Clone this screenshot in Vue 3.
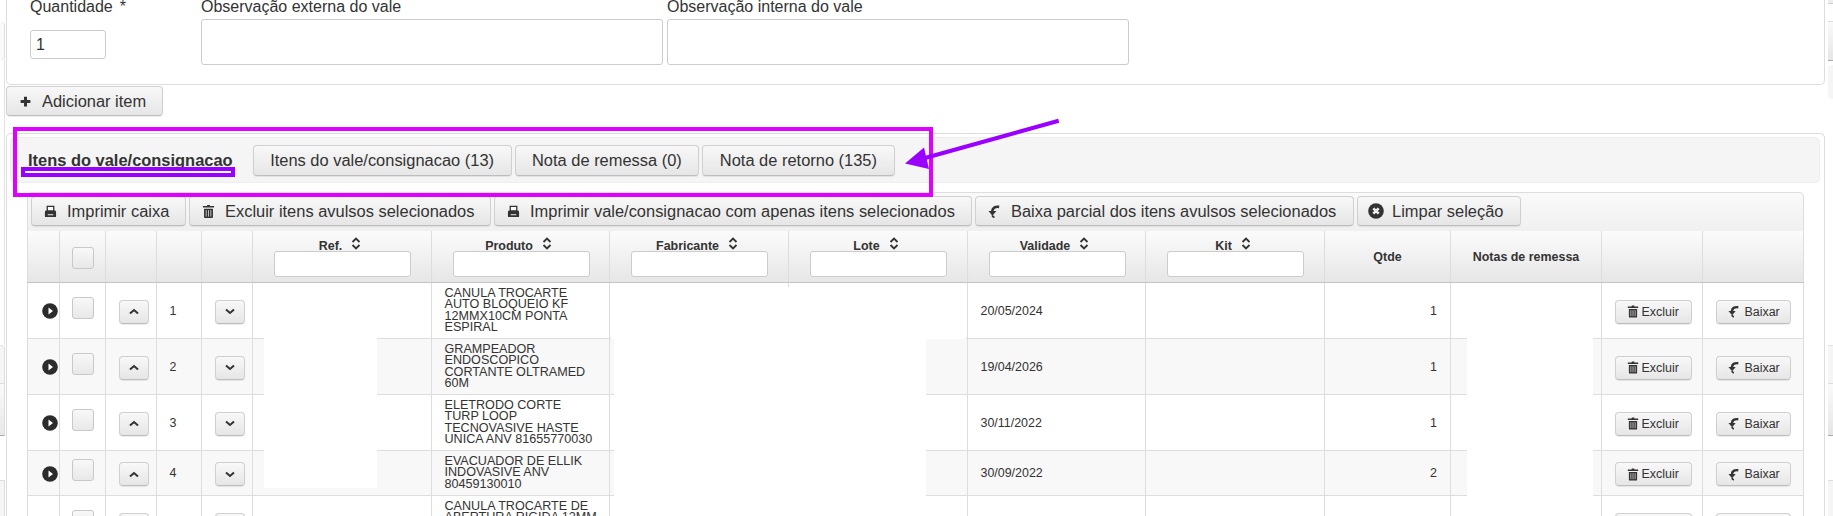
<script setup>
const toolbar = [
  { icon: 'print', label: 'Imprimir caixa', w: 155 },
  { icon: 'trash', label: 'Excluir itens avulsos selecionados', w: 302 },
  { icon: 'print', label: 'Imprimir vale/consignacao com apenas itens selecionados', w: 478 },
  { icon: 'undo', label: 'Baixa parcial dos itens avulsos selecionados', w: 379 },
  { icon: 'clear', label: 'Limpar seleção', w: 164 }
]
const colWidths = [32, 46, 51, 45, 51, 179, 178, 179, 179, 178, 179, 126, 151, 101, 101]
const sortCols = ['Ref.', 'Produto', 'Fabricante', 'Lote', 'Validade', 'Kit']
const rows = [
  { n: 1, h: 'r56', prod: 'CANULA TROCARTE\nAUTO BLOQUEIO KF\n12MMX10CM PONTA\nESPIRAL', date: '20/05/2024', q: 1 },
  { n: 2, h: 'r56', prod: 'GRAMPEADOR\nENDOSCOPICO\nCORTANTE OLTRAMED\n60M', date: '19/04/2026', q: 1 },
  { n: 3, h: 'r56', prod: 'ELETRODO CORTE\nTURP LOOP\nTECNOVASIVE HASTE\nUNICA ANV 81655770030', date: '30/11/2022', q: 1 },
  { n: 4, h: 'r45', prod: 'EVACUADOR DE ELLIK\nINDOVASIVE ANV\n80459130010', date: '30/09/2022', q: 2 },
  { n: 5, h: 'r56', prod: 'CANULA TROCARTE DE\nABERTURA RIGIDA 12MM\n\u00a0\n\u00a0', date: '', q: '' }
]
</script>

<template>
  <div class="page">
    <section class="form-panel">
      <div class="field qty">
        <label>Quantidade<span class="req">*</span></label>
        <input class="qty-input" value="1" />
      </div>
      <div class="field obs">
        <label>Observação externa do vale</label>
        <textarea></textarea>
      </div>
      <div class="field obs">
        <label>Observação interna do vale</label>
        <textarea></textarea>
      </div>
    </section>

    <button class="btn add-btn">
      <svg class="ic" viewBox="0 0 12 12"><path d="M4.600 1.500h2.800v3.100h3.100v2.800H7.400v3.100H4.600V7.400H1.500V4.600h3.100z" fill="#333" /></svg>
      <span>Adicionar item</span>
    </button>

    <section class="items-panel">
      <header class="tabs-bar">
        <h3>Itens do vale/consignacao</h3>
        <div class="tabs">
          <button class="btn tab">Itens do vale/consignacao (13)</button>
          <button class="btn tab">Nota de remessa (0)</button>
          <button class="btn tab">Nota de retorno (135)</button>
        </div>
      </header>

      <div class="grid-wrap">
        <div class="toolbar">
          <button v-for="b in toolbar" :key="b.label" class="btn tool" :class="{ 'tool-clear': b.icon === 'clear' }" :style="{ width: b.w + 'px' }">
            <svg v-if="b.icon === 'print'" class="ic" viewBox="0 0 14 14"><path d="M3.500 1.500h7v5h-7z" fill="#fff" stroke="#333" stroke-width="1.400" /><path d="M2.500 6h9A1.500 1.500 0 0 1 13 7.500V12a1 1 0 0 1-1 1H2a1 1 0 0 1-1-1V7.500A1.500 1.500 0 0 1 2.500 6z" fill="#333" /><path d="M4 10h6v1H4z" fill="#fff" /></svg>
            <svg v-else-if="b.icon === 'trash'" class="ic" viewBox="0 0 14 14"><path d="M5.500 0h3v1.200H13v1.600H1V1.200h4.500zM2.200 4h9.600v9a1 1 0 0 1-1 1H3.200a1 1 0 0 1-1-1z" fill="#333" /><path d="M4.500 5.500V12.500M7 5.500V12.500M9.500 5.500V12.500" stroke="#ddd" stroke-width=".9" /></svg>
            <svg v-else-if="b.icon === 'undo'" class="ic" viewBox="0 0 14 14"><path d="M12 2C7.500 1.400 4.800 3 4.500 7" fill="none" stroke="#333" stroke-width="2.800" /><path d="M.5 6.500H9L4.800 11.500z" fill="#333" /><path d="M4.800 11c0 1.300.8 2 2.200 2" fill="none" stroke="#333" stroke-width="1.800" /></svg>
            <svg v-else class="ic-big" viewBox="0 0 16 16"><circle cx="8" cy="8" r="7.800" fill="#333" /><path d="M5.300 5.300l5.400 5.400m0-5.400l-5.400 5.400" stroke="#eee" stroke-width="2.600" /></svg>
            <span>{{ b.label }}</span>
          </button>
        </div>

        <table class="grid">
          <colgroup>
            <col v-for="(w, i) in colWidths" :key="i" :style="{ width: w + 'px' }" />
          </colgroup>
          <thead>
            <tr>
              <th></th>
              <th><span class="check"></span></th>
              <th></th>
              <th></th>
              <th></th>
              <th v-for="c in sortCols" :key="c">
                <div class="th-title">
                  <span>{{ c }}</span>
                  <svg class="sort" viewBox="0 0 10 13"><path d="M1.500 5L5 1.500 8.500 5M1.500 8L5 11.500 8.500 8" fill="none" stroke="#333" stroke-width="1.800" /></svg>
                </div>
                <input class="filter" />
              </th>
              <th>Qtde</th>
              <th>Notas de remessa</th>
              <th></th>
              <th></th>
            </tr>
          </thead>
          <tbody>
            <tr v-for="r in rows" :key="r.n" :class="r.h">
              <td class="ctr">
                <svg class="play" viewBox="0 0 16 16"><circle cx="8" cy="8" r="7.800" fill="#2c2c2c" /><path d="M6.500 4.500L11 8l-4.500 3.500z" fill="#fff" /></svg>
              </td>
              <td class="ctr"><span class="check"></span></td>
              <td>
                <button class="btn mini">
                  <svg viewBox="0 0 10 7" class="chev"><path d="M1 5.500L5 2l4 3.500" fill="none" stroke="#333" stroke-width="2" /></svg>
                </button>
              </td>
              <td>{{ r.n }}</td>
              <td>
                <button class="btn mini">
                  <svg viewBox="0 0 10 7" class="chev"><path d="M1 1.500L5 5l4-3.500" fill="none" stroke="#333" stroke-width="2" /></svg>
                </button>
              </td>
              <td></td>
              <td class="prod">{{ r.prod }}</td>
              <td></td>
              <td></td>
              <td>{{ r.date }}</td>
              <td></td>
              <td class="qtd">{{ r.q }}</td>
              <td></td>
              <td>
                <button class="btn act act-x">
                  <svg class="ic-sm" viewBox="0 0 14 14"><path d="M5.500 0h3v1.200H13v1.600H1V1.200h4.500zM2.200 4h9.600v9a1 1 0 0 1-1 1H3.200a1 1 0 0 1-1-1z" fill="#333" /><path d="M4.500 5.500V12.500M7 5.500V12.500M9.500 5.500V12.500" stroke="#ddd" stroke-width=".9" /></svg>
                  <span>Excluir</span>
                </button>
              </td>
              <td>
                <button class="btn act act-b">
                  <svg class="ic-sm" viewBox="0 0 14 14"><path d="M12 2C7.500 1.400 4.800 3 4.500 7" fill="none" stroke="#333" stroke-width="2.800" /><path d="M.5 6.500H9L4.800 11.500z" fill="#333" /><path d="M4.800 11c0 1.300.8 2 2.200 2" fill="none" stroke="#333" stroke-width="1.800" /></svg>
                  <span>Baixar</span>
                </button>
              </td>
            </tr>
          </tbody>
        </table>
      </div>
    </section>

    <!-- fragments of the window behind, showing at both edges -->
    <div class="edge e-l1"></div>
    <div class="edge e-l2"></div>
    <div class="edge e-l3"></div>
    <div class="edge e-l4"></div>
    <div class="edge e-l5"></div>
    <div class="edge e-r0"></div>
    <div class="edge e-r1"></div>
    <div class="edge e-r2"></div>
    <div class="edge e-r3"></div>
    <div class="edge e-r4"></div>
    <div class="edge e-r5"></div>

    <!-- redaction patches lying over the table -->
    <div class="mask m-ref"></div>
    <div class="mask m-mid-top"></div>
    <div class="mask m-mid"></div>
    <div class="mask m-notas"></div>

    <!-- annotations drawn over the screenshot -->
    <div class="note-box"></div>
    <div class="note-under"></div>
    <svg class="note-arrow" viewBox="0 0 1833 516">
      <path d="M1058.700 120.700L925 158" stroke="#9900ff" stroke-width="4" fill="none" />
      <path d="M905 163.500L924 147.500 929 169z" fill="#9900ff" />
    </svg>
  </div>
</template>

<style>
html, body { margin: 0; overflow: hidden; background: #fff; }
</style>

<style scoped>
.page {
  position: relative;
  width: 1833px;
  height: 516px;
  overflow: hidden;
  background: #fff;
  font-family: "Liberation Sans", Arial, sans-serif;
  font-size: 16px;
  color: #333;
}
button { font-family: inherit; color: #333; }

.form-panel {
  box-sizing: border-box;
  width: 1819px;
  height: 85px;
  margin-left: 6px;
  border: 1px solid #ddd;
  border-top: 0;
  border-radius: 0 0 5px 5px;
  padding-left: 23px;
  display: flex;
}
.field label { display: block; line-height: 14px; }
.req { margin-left: 7px; }
.qty { width: 171px; }
.qty-input {
  display: block;
  box-sizing: border-box;
  width: 76px;
  height: 29px;
  margin-top: 16px;
  padding: 0 5px;
  border: 1px solid #ccc;
  border-radius: 3px;
  font: 16px "Liberation Sans", Arial, sans-serif;
  color: #333;
}
.obs { width: 466px; }
.obs textarea {
  display: block;
  box-sizing: border-box;
  width: 462px;
  height: 46px;
  margin-top: 5px;
  border: 1px solid #ccc;
  border-radius: 3px;
  resize: none;
}

.btn {
  box-sizing: border-box;
  border: 1px solid #d0d0d0;
  border-bottom-color: #bdbdbd;
  border-radius: 4px;
  background: linear-gradient(#f8f8f8, #e6e6e6);
  box-shadow: 0 1px 1px rgba(0, 0, 0, .08);
  padding: 0;
  font-size: 16.450px;
  display: inline-flex;
  align-items: center;
  justify-content: center;
}
.add-btn {
  display: flex;
  width: 157px;
  height: 30px;
  margin: 1px 0 0 6px;
  justify-content: flex-start;
  padding-left: 12px;
  gap: 10px;
}
.ic { width: 13px; height: 13px; flex: none; }
.ic-big { width: 16px; height: 16px; flex: none; }

.items-panel {
  box-sizing: border-box;
  width: 1819px;
  height: 420px;
  margin: 17px 0 0 6px;
  border: 1px solid #ddd;
  border-bottom: 0;
  border-radius: 5px 5px 0 0;
  padding-top: 3px;
}
.tabs-bar {
  box-sizing: border-box;
  width: 1810px;
  height: 46px;
  margin-left: 3px;
  padding-left: 17px;
  background: #f5f5f5;
  border: 1px solid #eee;
  border-radius: 5px;
  display: flex;
  align-items: center;
  gap: 20px;
}
.tabs-bar h3 {
  margin: 0;
  font-size: 16.450px;
  line-height: 20px;
  font-weight: 700;
  text-decoration: underline;
}
.tabs { display: flex; gap: 3px; }
.tab { height: 31px; padding: 0 16.500px; }

.grid-wrap { margin: 9px 0 0 20px; width: 1777px; }
.toolbar {
  box-sizing: border-box;
  height: 39px;
  border: 1px solid #ddd;
  border-bottom: 0;
  border-radius: 5px 5px 0 0;
  background: linear-gradient(#fafafa, #f0f0f0);
  padding: 3px 0 0 3px;
  display: flex;
  gap: 3px;
}
.tool { height: 30px; justify-content: flex-start; padding-left: 12px; gap: 10px; }
.tool-clear { padding-left: 10px; gap: 8px; }

.grid {
  table-layout: fixed;
  border-collapse: collapse;
  width: 1776px;
  font-size: 12.450px;
}
.grid th, .grid td { border: 1px solid #ddd; padding: 0; }
.grid th {
  height: 51px;
  background: linear-gradient(#fbfbfb, #e6e6e6);
  border-top: 0;
  border-bottom: 1px solid #c4c4c4;
  font-weight: 700;
  vertical-align: middle;
  text-align: center;
}
.th-title {
  display: flex;
  justify-content: center;
  align-items: flex-start;
  gap: 9px;
  height: 14px;
  padding-right: 4px;
  line-height: 24px;
}
.sort { width: 10px; height: 13px; margin-top: 3px; flex: none; }
.filter {
  display: block;
  box-sizing: border-box;
  width: 137px;
  height: 26px;
  margin: 3px 0 3px 20.500px;
  border: 1px solid #ccc;
  border-radius: 3px;
}
.r56 { height: 56px; }
.r45 { height: 45px; }
.grid tbody tr:nth-child(even) td { background: #f8f8f8; }
.grid td { padding: 0 13px 0 12.500px; vertical-align: middle; }
.grid td.ctr { padding: 0; text-align: center; }
.prod { white-space: pre; line-height: 11.500px; font-size: 12.600px; }
.qtd { text-align: right; }
.check {
  display: inline-block;
  box-sizing: border-box;
  width: 22px;
  height: 22px;
  vertical-align: middle;
  border: 1px solid #c8c8c8;
  border-radius: 3px;
  background: linear-gradient(#f8f8f8, #e8e8e8);
  position: relative;
  top: 1px;
}
td .check { top: -3px; }
.play { width: 16px; height: 16px; display: block; margin: 1px 0 0 14px; }
.mini { width: 30px; height: 24px; font-size: 12px; vertical-align: middle; position: relative; top: 1px; }
.chev { width: 10px; height: 7px; }
.act { height: 24px; font-size: 12.450px; vertical-align: middle; position: relative; top: 1px; justify-content: flex-start; padding-left: 11px; }
.act-x { width: 77px; gap: 3px; }
.act-b { width: 75px; gap: 5px; }
.ic-sm { width: 12px; height: 13px; flex: none; }

.edge { position: absolute; box-sizing: border-box; }
.e-l1 { left: 0; top: 22px; width: 5px; height: 38px; border-right: 1px solid #ddd; border-radius: 0 4px 4px 0; background: #fafafa; }
.e-l2 { left: 4px; top: 60px; width: 1px; height: 285px; background: #e2e2e2; }
.e-l3 { left: 0; top: 345px; width: 5px; height: 38px; background: #f5f5f5; border-top: 1px solid #e4e4e4; border-right: 1px solid #ddd; border-radius: 0 4px 0 0; }
.e-l4 { left: 0; top: 383px; width: 5px; height: 53px; background: linear-gradient(#fafafa, #e8e8e8); border-top: 1px solid #ddd; border-right: 1px solid #ddd; border-bottom: 1px solid #aaa; }
.e-l5 { left: 0; top: 480px; width: 5px; height: 36px; background: #f5f5f5; border-top: 1px solid #ddd; border-right: 1px solid #ddd; }
.e-r0 { left: 1828px; top: 0; width: 5px; height: 4px; background: #eee; border-bottom: 1px solid #ccc; }
.e-r1 { left: 1828px; top: 21px; width: 5px; height: 40px; background: linear-gradient(#fafafa, #e6e6e6); border-top: 1px solid #ddd; border-bottom: 1px solid #aaa; }
.e-r2 { left: 1828px; top: 65px; width: 5px; height: 34px; background: #f5f5f5; border-radius: 4px 0 0 4px; }
.e-r3 { left: 1828px; top: 345px; width: 5px; height: 38px; background: #f5f5f5; border-top: 1px solid #e4e4e4; }
.e-r4 { left: 1828px; top: 383px; width: 5px; height: 53px; background: linear-gradient(#fafafa, #e6e6e6); border-top: 1px solid #ddd; border-bottom: 1px solid #aaa; }
.e-r5 { left: 1828px; top: 480px; width: 5px; height: 36px; background: #f5f5f5; border-top: 1px solid #ddd; }

.mask { position: absolute; background: #fff; }
.m-ref { left: 264px; top: 338px; width: 113px; height: 150px; }
.m-mid-top { left: 611px; top: 287px; width: 355px; height: 52px; }
.m-mid { left: 614px; top: 338px; width: 312px; height: 178px; }
.m-notas { left: 1467px; top: 338px; width: 126px; height: 178px; }

.note-box {
  position: absolute;
  left: 13px;
  top: 127px;
  width: 920px;
  height: 70px;
  box-sizing: border-box;
  border: 4px solid #e000ff;
}
.note-under {
  position: absolute;
  left: 21px;
  top: 167px;
  width: 214px;
  height: 10px;
  box-sizing: border-box;
  border: 4px solid #9900ff;
  background: #fff;
}
.note-arrow { position: absolute; left: 0; top: 0; width: 1833px; height: 516px; pointer-events: none; }
</style>
